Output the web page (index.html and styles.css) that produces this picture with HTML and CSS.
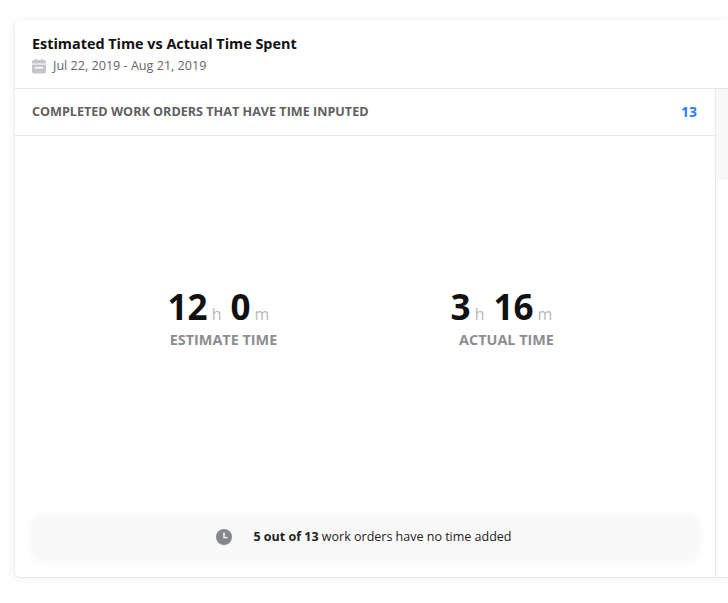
FILE: index.html
```html
<!DOCTYPE html>
<html lang="en">
<head>
    <meta charset="UTF-8">
    <meta name="viewport" content="width=device-width, initial-scale=1.0">
    <title>Estimated Time vs Actual Time Spent</title>
    <link rel="stylesheet" href="styles.css">
</head>
<body>

<div class="card">
    <header class="card-header">
        <h1>Estimated Time vs Actual Time Spent</h1>
        <p class="date-range">
            <svg class="calendar-icon" width="14" height="16" viewBox="0 0 14 16">
                <rect x="3" y="0.5" width="1.6" height="3" rx="0.8" fill="#c4c6c9"/>
                <rect x="9.4" y="0.5" width="1.6" height="3" rx="0.8" fill="#c4c6c9"/>
                <path d="M2 2h10a2 2 0 0 1 2 2v9.5a2 2 0 0 1-2 2H2a2 2 0 0 1-2-2V4a2 2 0 0 1 2-2z" fill="#c4c6c9"/>
                <rect x="0" y="5.5" width="14" height="1" fill="#fff"/>
                <rect x="3" y="9" width="8" height="1.5" fill="#fff"/>
            </svg>
            Jul 22, 2019 - Aug 21, 2019
        </p>
    </header>

    <div class="card-body">
        <div class="main-panel">
            <div class="summary-row">
                <span>COMPLETED WORK ORDERS THAT HAVE TIME INPUTED</span>
                <span class="summary-count">13</span>
            </div>

            <div class="times">
                <div class="time-block">
                    <div class="time-value">12<small>h</small> 0<small>m</small></div>
                    <div class="time-label">ESTIMATE TIME</div>
                </div>
                <div class="time-block">
                    <div class="time-value">3<small>h</small> 16<small>m</small></div>
                    <div class="time-label">ACTUAL TIME</div>
                </div>
            </div>

            <div class="notice">
                <svg class="clock-icon" width="16" height="16" viewBox="0 0 16 16">
                    <circle cx="8" cy="8" r="8" fill="#85888c"/>
                    <path d="M8 3.5V8.6H11.5" fill="none" stroke="#fff" stroke-width="1.4"/>
                </svg>
                <span><b>5 out of 13</b> work orders have no time added</span>
            </div>
        </div>
        <div class="side-panel">
            <div class="side-block"></div>
        </div>
    </div>
</div>

</body>
</html>
```

FILE: styles.css
```css
* {
    margin: 0;
    padding: 0;
    box-sizing: border-box;
}

html, body {
    height: 100%;
    overflow: hidden;
}

body {
    font-family: "Open Sans", Arial, sans-serif;
    background-color: #fff;
    color: #111;
    padding: 20px 0 0 14px;
}

.card {
    width: 714px;
    height: 558px;
    display: flex;
    flex-direction: column;
    background-color: #fff;
    border-radius: 6px 0 0 6px;
    border-bottom: 1px solid #e9e9e9;
    border-left: 1px solid #efefef;
    box-shadow: 0 0 8px rgba(0, 0, 0, 0.07);
}

.card-header {
    height: 69px;
    padding: 14px 0 0 17px;
    border-bottom: 1px solid #e6e6e6;
}

.card-header h1 {
    font-size: 14.4px;
    line-height: 19px;
    font-weight: 700;
}

.date-range {
    display: flex;
    align-items: center;
    gap: 7px;
    margin-top: 4px;
    font-size: 12.6px;
    line-height: 18px;
    color: #666;
}

.card-body {
    flex: 1;
    display: flex;
    min-height: 0;
}

.main-panel {
    width: 701px;
    display: flex;
    flex-direction: column;
    border-right: 1px solid #e9e9e9;
}

.summary-row {
    height: 47px;
    flex-shrink: 0;
    display: flex;
    justify-content: space-between;
    align-items: center;
    padding: 0 18px 2px 17px;
    border-bottom: 1px solid #e6e6e6;
    font-size: 12.6px;
    font-weight: 700;
    color: #5f6062;
}

.summary-count {
    font-size: 14px;
    color: #2b7cf6;
}

.times {
    flex: 1;
    display: flex;
    padding: 151px 0 0 67px;
}

.time-block {
    width: 283px;
    text-align: center;
}

.time-value {
    padding-right: 10px;
    font-size: 35px;
    line-height: 40px;
    font-weight: 700;
    color: #111;
}

.time-value small {
    margin-left: 4px;
    font-size: 16px;
    font-weight: 400;
    color: #b9b9b9;
}

.time-label {
    margin-top: -4px;
    font-size: 14.4px;
    line-height: 19px;
    font-weight: 700;
    color: #8c8d8f;
}

.notice {
    flex-shrink: 0;
    height: 47px;
    margin: 0 15px 17px 16px;
    padding-right: 3px;
    display: flex;
    justify-content: center;
    align-items: center;
    gap: 21px;
    background-color: #f9f9f9;
    border-radius: 14px;
    box-shadow: 0 2px 8px 1px rgba(0, 0, 0, 0.03);
    font-size: 12.5px;
    color: #222;
}

.side-panel {
    flex: 1;
}

.side-block {
    height: 91px;
    background-color: #f8f8f8;
}
```
